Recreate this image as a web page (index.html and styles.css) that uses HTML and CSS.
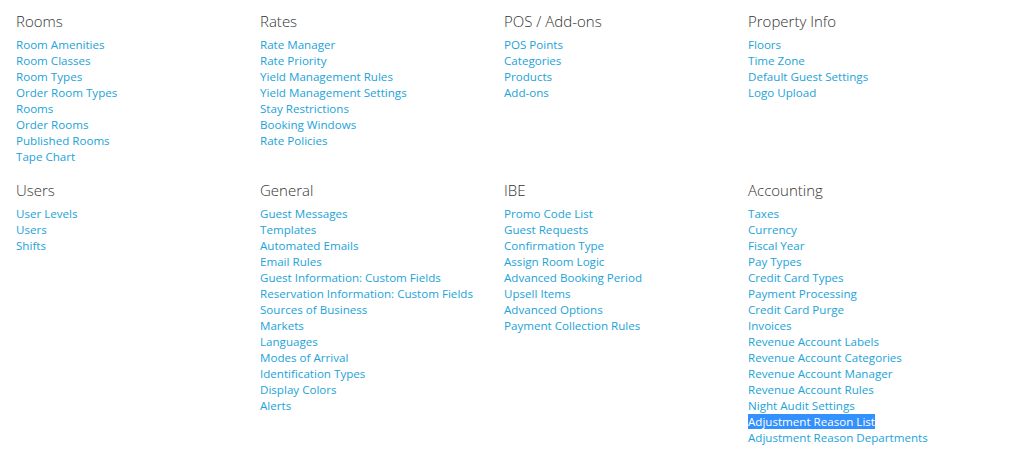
FILE: index.html
```html
<!DOCTYPE html>
<html>
<head>
<meta charset="utf-8">
<link rel="stylesheet" href="styles.css">
</head>
<body>
<div class="grid">
  <section class="group">
    <h3 class="title">Rooms</h3>
    <ul class="links">
      <li><a href="#">Room Amenities</a></li>
      <li><a href="#">Room Classes</a></li>
      <li><a href="#">Room Types</a></li>
      <li><a href="#">Order Room Types</a></li>
      <li><a href="#">Rooms</a></li>
      <li><a href="#">Order Rooms</a></li>
      <li><a href="#">Published Rooms</a></li>
      <li><a href="#">Tape Chart</a></li>
    </ul>
  </section>
  <section class="group">
    <h3 class="title">Rates</h3>
    <ul class="links">
      <li><a href="#">Rate Manager</a></li>
      <li><a href="#">Rate Priority</a></li>
      <li><a href="#">Yield Management Rules</a></li>
      <li><a href="#">Yield Management Settings</a></li>
      <li><a href="#">Stay Restrictions</a></li>
      <li><a href="#">Booking Windows</a></li>
      <li><a href="#">Rate Policies</a></li>
    </ul>
  </section>
  <section class="group">
    <h3 class="title">POS / Add-ons</h3>
    <ul class="links">
      <li><a href="#">POS Points</a></li>
      <li><a href="#">Categories</a></li>
      <li><a href="#">Products</a></li>
      <li><a href="#">Add-ons</a></li>
    </ul>
  </section>
  <section class="group">
    <h3 class="title">Property Info</h3>
    <ul class="links">
      <li><a href="#">Floors</a></li>
      <li><a href="#">Time Zone</a></li>
      <li><a href="#">Default Guest Settings</a></li>
      <li><a href="#">Logo Upload</a></li>
    </ul>
  </section>
  <section class="group">
    <h3 class="title">Users</h3>
    <ul class="links">
      <li><a href="#">User Levels</a></li>
      <li><a href="#">Users</a></li>
      <li><a href="#">Shifts</a></li>
    </ul>
  </section>
  <section class="group">
    <h3 class="title">General</h3>
    <ul class="links">
      <li><a href="#">Guest Messages</a></li>
      <li><a href="#">Templates</a></li>
      <li><a href="#">Automated Emails</a></li>
      <li><a href="#">Email Rules</a></li>
      <li><a href="#">Guest Information: Custom Fields</a></li>
      <li><a href="#">Reservation Information: Custom Fields</a></li>
      <li><a href="#">Sources of Business</a></li>
      <li><a href="#">Markets</a></li>
      <li><a href="#">Languages</a></li>
      <li><a href="#">Modes of Arrival</a></li>
      <li><a href="#">Identification Types</a></li>
      <li><a href="#">Display Colors</a></li>
      <li><a href="#">Alerts</a></li>
    </ul>
  </section>
  <section class="group">
    <h3 class="title">IBE</h3>
    <ul class="links">
      <li><a href="#">Promo Code List</a></li>
      <li><a href="#">Guest Requests</a></li>
      <li><a href="#">Confirmation Type</a></li>
      <li><a href="#">Assign Room Logic</a></li>
      <li><a href="#">Advanced Booking Period</a></li>
      <li><a href="#">Upsell Items</a></li>
      <li><a href="#">Advanced Options</a></li>
      <li><a href="#">Payment Collection Rules</a></li>
    </ul>
  </section>
  <section class="group">
    <h3 class="title">Accounting</h3>
    <ul class="links">
      <li><a href="#">Taxes</a></li>
      <li><a href="#">Currency</a></li>
      <li><a href="#">Fiscal Year</a></li>
      <li><a href="#">Pay Types</a></li>
      <li><a href="#">Credit Card Types</a></li>
      <li><a href="#">Payment Processing</a></li>
      <li><a href="#">Credit Card Purge</a></li>
      <li><a href="#">Invoices</a></li>
      <li><a href="#">Revenue Account Labels</a></li>
      <li><a href="#">Revenue Account Categories</a></li>
      <li><a href="#">Revenue Account Manager</a></li>
      <li><a href="#">Revenue Account Rules</a></li>
      <li><a href="#">Night Audit Settings</a></li>
      <li><a href="#" class="selected">Adjustment Reason List</a></li>
      <li><a href="#">Adjustment Reason Departments</a></li>
    </ul>
  </section>
</div>
</body>
</html>
```
FILE: styles.css
```css
html, body {
  margin: 0;
  padding: 0;
  background: #ffffff;
}
body {
  font-family: "Open Sans", "Liberation Sans", sans-serif;
}
.grid {
  display: grid;
  grid-template-columns: repeat(4, 244px);
  padding: 10px 0 0 16px;
  row-gap: 14px;
}
.group {
  min-width: 0;
}
.title {
  margin: 0 0 5px 0;
  font-size: 15px;
  line-height: 22px;
  font-weight: 300;
  color: #333333;
}
.links {
  list-style: none;
  margin: 0;
  padding: 0;
}
.links li {
  font-size: 11.6px;
  line-height: 16px;
  white-space: nowrap;
}
.links a {
  color: #22a3d8;
  text-decoration: none;
}
.links a.selected {
  background: #3390ff;
  color: #ffffff;
}
```
